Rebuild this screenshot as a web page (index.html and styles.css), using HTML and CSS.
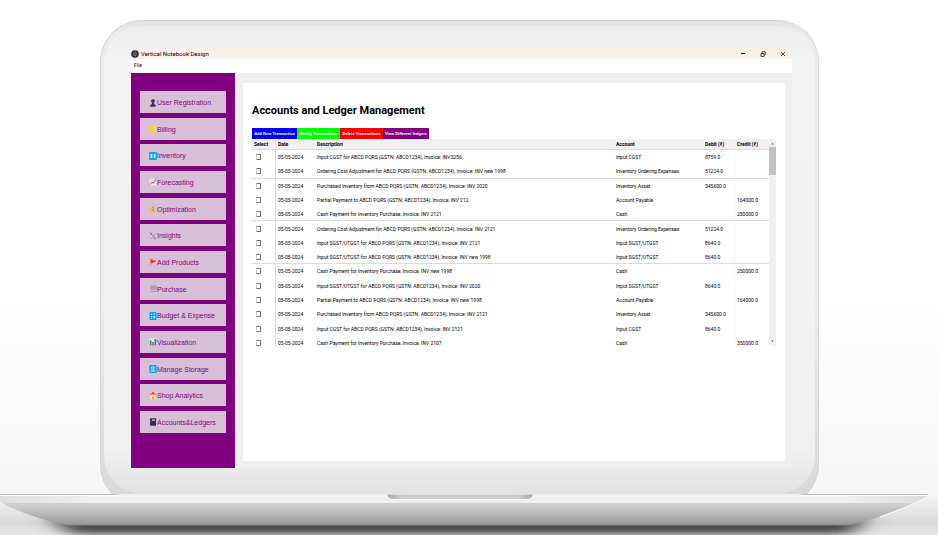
FILE: index.html
```html
<!DOCTYPE html>
<html lang="en">
<head>
<meta charset="utf-8">
<meta name="viewport" content="width=device-width, initial-scale=1">
<title>Vertical Notebook Design</title>
<link rel="stylesheet" href="styles.css">
</head>
<body>
<div class="laptop">
  <div class="lid">
    <div class="bezel">
      <div class="screen">
        <header class="titlebar">
          <svg class="logo" viewBox="0 0 8 8"><circle cx="4" cy="4" r="3.8" fill="#2b303c"/><path d="M3 2.200v2.600a1 1 0 0 0 2 0V3.200M4 1.800l1.400.8" fill="none" stroke="#a9b4c4" stroke-width=".7"/></svg>
          <span class="caption">Vertical Notebook Design</span>
          <button class="win" aria-label="Minimize"><svg viewBox="0 0 6 6"><path d="M1 2.500h4" stroke="#000"/></svg></button>
          <button class="win" aria-label="Restore"><svg viewBox="0 0 6 6"><path d="M1 2.500h3v3H1zM2.200 2V.8h3v3H4.400" fill="none" stroke="#222" stroke-width=".8"/></svg></button>
          <button class="win" aria-label="Close"><svg viewBox="0 0 6 6"><path d="M1 1l4 4M5 1L1 5" stroke="#222" stroke-width=".8"/></svg></button>
        </header>
        <div class="menubar"><button class="menu">File</button></div>
        <div class="workspace">
          <nav class="sidebar">
            <button class="tab"><svg viewBox="0 0 8 8"><path d="M4 .3a1.700 1.700 0 0 1 1 3.200L5.200 5l1.500 1v1.700H1.300V6l1.500-1L3 3.500A1.700 1.700 0 0 1 4 .3z" fill="#44305c"/></svg>User Registration</button>
            <button class="tab"><svg viewBox="0 0 8 8"><path d="M1 .5h6v7H1z" fill="#ffd43b"/><path d="M2 2.500h2M2 4.500h3" stroke="#e8a91d" stroke-width=".7"/></svg>Billing</button>
            <button class="tab"><svg viewBox="0 0 8 8"><rect width="8" height="8" rx="1" fill="#00a6ed"/><path d="M1.500 1.500L4 3l2.500-1.500v5L4 5 1.500 6.500z" fill="#d8f2ff"/><path d="M3.200 3.200h1.600v1.600H3.200z" fill="#0084ce"/></svg>Inventory</button>
            <button class="tab"><svg viewBox="0 0 8 8"><path d="M.5.5h7v7h-7z" fill="#efe9f4"/><path d="M.5 3h7M.5 5.500h7M3 .5v7M5.500.5v7" stroke="#cfc2dc" stroke-width=".4"/><path d="M.8 6.800l2.200-2.600 1.300 1L7.300.8" fill="none" stroke="#f0304c" stroke-width=".9"/></svg>Forecasting</button>
            <button class="tab"><svg viewBox="0 0 8 8"><path d="M3 .5h2L4.700 2.200C6.500 3 7 4.500 6.800 6 6.600 7.300 5.600 7.600 4 7.600S1.400 7.300 1.200 6C1 4.500 1.500 3 3.300 2.200z" fill="#f9b65b"/><path d="M3 2.300h2M4 3.700v2.800M3.300 5h1.400" stroke="#a56a3a" stroke-width=".6"/></svg>Optimization</button>
            <button class="tab"><svg viewBox="0 0 8 8"><path d="M1.200 1l4 4.200M6.500 1.500L2 7M4 5.500l2.500 2" stroke="#8d86a8" stroke-width=".8"/><path d="M1 .6l2 1.800" stroke="#3f6ea8"/><circle cx="6" cy="6" r=".8" fill="#48a070"/></svg>Insights</button>
            <button class="tab"><svg viewBox="0 0 8 8"><path d="M1.300.5v7" stroke="#f08a3c" stroke-width=".8"/><path d="M1.700.8L7.500 3.300 1.700 5.800z" fill="#f8312f"/></svg>Add Products</button>
            <button class="tab"><svg viewBox="0 0 8 8"><path d="M.5 1h6.800v3.500H1.500M1 2.800h6M3 1v3.500M5.200 1v3.500M1 6.500h6.500" fill="none" stroke="#918d98" stroke-width=".8"/></svg>Purchase</button>
            <button class="tab"><svg viewBox="0 0 8 8"><rect x=".5" width="7" height="8" rx="1" fill="#00a6ed"/><path d="M2 1.500h1.200v1.200H2zM2 4h1.200v1.200H2zM4.600 1.500h1.200v1.200H4.600zM4.600 4h1.200v2.500H4.600zM2 6h1.200v.8H2z" fill="#e8f8ff"/></svg>Budget &amp; Expense</button>
            <button class="tab"><svg viewBox="0 0 8 8"><path d="M.3.3h7.400v7.400H.3z" fill="#e9e4ef"/><path d="M.8 2.500h1.700v5H.8z" fill="#00a35c"/><path d="M3.200 4h1.500v3.500H3.200z" fill="#f52b5c"/><path d="M5.500 1h1.700v6.500H5.500z" fill="#0084ce"/></svg>Visualization</button>
            <button class="tab"><svg viewBox="0 0 8 8"><rect x=".3" width="7.400" height="8" rx="1" fill="#00a6ed"/><path d="M2.500 1.500h3v3h-3zM1.500 5.500h5v1h-5z" fill="#e8f8ff"/><path d="M4 2v2" stroke="#0084ce"/></svg>Manage Storage</button>
            <button class="tab"><svg viewBox="0 0 8 8"><path d="M1.200 3h5.600v4.700H1.200z" fill="#fbd9a0"/><path d="M.5 1.200h7L7 3H1z" fill="#f58a3c"/><path d="M3 0h2v2H3z" fill="#f8453f"/><path d="M3.200 4.500h1.600v3.200H3.200z" fill="#e49a4c"/></svg>Shop Analytics</button>
            <button class="tab"><svg viewBox="0 0 8 8"><path d="M1 .3h6v7.400H1z" fill="#38244f"/><path d="M3 1.500h2.800V3H3z" fill="#c9bdd6"/><path d="M1.700.3v7" stroke="#77628f" stroke-width=".4"/></svg>Accounts&amp;Ledgers</button>
          </nav>
          <main class="content">
            <section class="panel">
              <h1>Accounts and Ledger Management</h1>
              <div class="actions">
                <button class="add">Add New Transaction</button>
                <button class="modify">Modify Transactions</button>
                <button class="delete">Delete Transactions</button>
                <button class="view">View Different ledgers</button>
              </div>
              <div class="scroller">
                <table>
                  <colgroup><col class="c-select"><col class="c-date"><col class="c-desc"><col class="c-account"><col class="c-debit"><col class="c-credit"></colgroup>
                  <thead><tr><th>Select</th><th>Date</th><th>Description</th><th>Account</th><th>Debit (₹)</th><th>Credit (₹)</th></tr></thead>
                  <tbody>
                    <tr><td><input type="checkbox" aria-label="Select row 1"></td><td>05-05-2024</td><td>Input CGST for ABCD PQRS (GSTN: ABCD1234), Invoice: INV3256</td><td>Input CGST</td><td>8759.0</td><td></td></tr>
                    <tr><td><input type="checkbox" aria-label="Select row 2"></td><td>05-05-2024</td><td>Ordering Cost Adjustment for ABCD PQRS (GSTN: ABCD1234), Invoice: INV new 1998</td><td>Inventory Ordering Expenses</td><td>51224.0</td><td></td></tr>
                    <tr><td><input type="checkbox" aria-label="Select row 3"></td><td>05-05-2024</td><td>Purchased Inventory from ABCD PQRS (GSTN: ABCD1234), Invoice: INV 2020</td><td>Inventory Asset</td><td>345600.0</td><td></td></tr>
                    <tr><td><input type="checkbox" aria-label="Select row 4"></td><td>05-05-2024</td><td>Partial Payment to ABCD PQRS (GSTN: ABCD1234), Invoice: INV 212</td><td>Account Payable</td><td></td><td>164000.0</td></tr>
                    <tr><td><input type="checkbox" aria-label="Select row 5"></td><td>05-05-2024</td><td>Cash Payment for Inventory Purchase, Invoice: INV 2121</td><td>Cash</td><td></td><td>250000.0</td></tr>
                    <tr><td><input type="checkbox" aria-label="Select row 6"></td><td>05-05-2024</td><td>Ordering Cost Adjustment for ABCD PQRS (GSTN: ABCD1234), Invoice: INV 2121</td><td>Inventory Ordering Expenses</td><td>51224.0</td><td></td></tr>
                    <tr><td><input type="checkbox" aria-label="Select row 7"></td><td>05-05-2024</td><td>Input SGST/UTGST for ABCD PQRS (GSTN: ABCD1234), Invoice: INV 2121</td><td>Input SGST/UTGST</td><td>8640.0</td><td></td></tr>
                    <tr><td><input type="checkbox" aria-label="Select row 8"></td><td>05-05-2024</td><td>Input SGST/UTGST for ABCD PQRS (GSTN: ABCD1234), Invoice: INV new 1998</td><td>Input SGST/UTGST</td><td>8640.0</td><td></td></tr>
                    <tr><td><input type="checkbox" aria-label="Select row 9"></td><td>05-05-2024</td><td>Cash Payment for Inventory Purchase, Invoice: INV new 1998</td><td>Cash</td><td></td><td>250000.0</td></tr>
                    <tr><td><input type="checkbox" aria-label="Select row 10"></td><td>05-05-2024</td><td>Input SGST/UTGST for ABCD PQRS (GSTN: ABCD1234), Invoice: INV 2020</td><td>Input SGST/UTGST</td><td>8640.0</td><td></td></tr>
                    <tr><td><input type="checkbox" aria-label="Select row 11"></td><td>05-05-2024</td><td>Partial Payment to ABCD PQRS (GSTN: ABCD1234), Invoice: INV new 1998</td><td>Account Payable</td><td></td><td>164000.0</td></tr>
                    <tr><td><input type="checkbox" aria-label="Select row 12"></td><td>05-05-2024</td><td>Purchased Inventory from ABCD PQRS (GSTN: ABCD1234), Invoice: INV 2121</td><td>Inventory Asset</td><td>345600.0</td><td></td></tr>
                    <tr><td><input type="checkbox" aria-label="Select row 13"></td><td>05-05-2024</td><td>Input CGST for ABCD PQRS (GSTN: ABCD1234), Invoice: INV 2121</td><td>Input CGST</td><td>8640.0</td><td></td></tr>
                    <tr><td><input type="checkbox" aria-label="Select row 14"></td><td>05-05-2024</td><td>Cash Payment for Inventory Purchase, Invoice: INV 2107</td><td>Cash</td><td></td><td>350000.0</td></tr>
                  </tbody>
                </table>
                <div class="scrollbar">
                  <svg viewBox="0 0 7 8"><path d="M2 5.500L3.500 3.500 5 5.500z" fill="#888"/></svg>
                  <div class="thumb"></div>
                  <svg class="down" viewBox="0 0 7 8"><path d="M2.500 2.500h2L3.500 4z" fill="#333"/></svg>
                </div>
              </div>
            </section>
          </main>
        </div>
      </div>
    </div>
  </div>
</div>
<svg class="base" viewBox="0 0 938 41" preserveAspectRatio="none" aria-hidden="true">
  <defs>
    <linearGradient id="body" x1="0" y1="0" x2="0" y2="1"><stop offset="0" stop-color="#d2d2d2"/><stop offset=".4" stop-color="#bdbdbd"/><stop offset="1" stop-color="#969696"/></linearGradient>
    <linearGradient id="deck" x1="0" x2="1"><stop offset="0" stop-color="#dedede"/><stop offset=".1" stop-color="#f0f0f0"/><stop offset=".9" stop-color="#f0f0f0"/><stop offset="1" stop-color="#d8d8d8"/></linearGradient>
    <linearGradient id="ground" x1="0" y1="0" x2="0" y2="1"><stop offset="0" stop-color="#f6f6f6"/><stop offset=".7" stop-color="#dadada"/><stop offset="1" stop-color="#e6e6e6"/></linearGradient>
    <linearGradient id="lip" x1="0" x2="1"><stop offset="0" stop-color="#a8a8a8"/><stop offset=".1" stop-color="#cdcdcd"/><stop offset=".9" stop-color="#cdcdcd"/><stop offset="1" stop-color="#a8a8a8"/></linearGradient>
    <filter id="soft" x="-20%" y="-200%" width="140%" height="500%"><feGaussianBlur stdDeviation="12 3"/></filter>
    <clipPath id="shell"><path d="M0 0H928L927 4Q892 21 850 31H68Q30 24 0 8z"/></clipPath>
  </defs>
  <path d="M0 0H938V41H0z" fill="url(#ground)"/>
  <path d="M50 24H868L850 40H70z" fill="#4c4c4c" filter="url(#soft)"/>
  <g clip-path="url(#shell)">
    <path d="M0 0H938V9H0z" fill="url(#deck)"/>
    <path d="M0 9H938V31H0z" fill="url(#body)"/>
  </g>
  <path d="M68 31H850" stroke="#858585" stroke-width="1"/>
  <path d="M0 .5H118M801 .5H927" stroke="#bdbdbd"/>
  <path d="M0 1.500H119M801 1.500H927L926 4Q905 14 880 23" fill="none" stroke="#fff"/>
  <path d="M387 .5H533Q531 5 527 5H393Q389 5 387 .5z" fill="url(#lip)"/>
  <path d="M391 5.500H529" stroke="#fff"/>
</svg>
</body>
</html>
```
FILE: styles.css
```css
* {
  box-sizing: border-box;
}

body {
  margin: 0;
  overflow: hidden;
  background: linear-gradient(#fff 0, #fff 300px, #f6f6f6 500px);
  font-family: Roboto, "Liberation Sans", Arial, sans-serif;
  color: #000;
}

button {
  margin: 0;
  padding: 0;
  border: 0;
  background: none;
  color: inherit;
  font: inherit;
  white-space: nowrap;
}

.laptop {
  padding: 20px 119px 0 100px;
}

.lid {
  margin-bottom: -13px;
  padding: 6px 4px 13px;
  border-radius: 42px;
  background: linear-gradient(#e0e0de, #ececec 12px, #ececec 60%, #d8d8d8);
  box-shadow: inset 0 0 0 1px #d6d6d2, 0 0 0 1px #fff;
}

.bezel {
  padding: 22px 23px 26px 27px;
  border-radius: 38px;
  background: linear-gradient(#ededed, #f3f3f3 30px, #f1f1f1 90%, #e2e2e2);
}

.titlebar {
  display: flex;
  align-items: center;
  height: 11px;
  padding: 0 6px 0 0;
  background: #faf0eb;
  font-size: 6px;
}

.logo {
  width: 8px;
  height: 8px;
  margin-right: 2px;
}

.caption {
  flex: 1;
}

.win {
  display: flex;
  width: 6px;
  height: 6px;
  margin-left: 14px;
}

.win svg {
  width: 6px;
  height: 6px;
}

.menubar {
  display: flex;
  align-items: flex-start;
  height: 14px;
  padding: 3px 3px 0;
  background: #fff;
  font-size: 5px;
  line-height: 7px;
}

.workspace {
  display: flex;
  background: #efefef;
}

.sidebar {
  display: flex;
  flex: none;
  flex-direction: column;
  justify-content: space-between;
  width: 104px;
  height: 395px;
  padding: 18px 9px 35px;
  background: #800080;
}

.tab {
  display: flex;
  align-items: center;
  height: 22px;
  padding: 1px 9px 0;
  background: #d8bfd8;
  color: #800080;
  font-family: "Liberation Sans", Arial, sans-serif;
  font-size: 7px;
}

.tab svg {
  flex: none;
  width: 8px;
  height: 8px;
}

.content {
  display: flex;
  flex: 1;
  padding: 10px 7px 7px 8px;
}

.panel {
  flex: 1;
  padding: 20px 9px 0;
  background: #fff;
}

h1 {
  margin: 0 0 10px;
  font-size: 11px;
  line-height: 15px;
  white-space: nowrap;
}

.actions {
  display: flex;
  color: #fff;
  font-family: "Liberation Sans", Arial, sans-serif;
  font-size: 4px;
  font-weight: bold;
}

.actions button {
  height: 11px;
}

.add {
  width: 45px;
}

.modify,
.delete {
  width: 43px;
}

.view {
  width: 46px;
}

.actions .add {
  background: #00f;
}

.actions .modify {
  background: #0f0;
}

.actions .delete {
  background: #f00;
}

.actions .view {
  background: #800080;
}

.scroller {
  display: flex;
  align-items: flex-start;
  height: 207px;
  overflow: hidden;
}

table {
  flex: 1;
  height: 211px;
  border-collapse: separate;
  border-spacing: 0;
  table-layout: fixed;
  font-size: 5px;
  line-height: 6px;
}

.c-select {
  width: 24px;
}

.c-date {
  width: 39px;
}

.c-account {
  width: 89px;
}

.c-debit {
  width: 32px;
}

.c-credit {
  width: 34px;
}

th,
td {
  height: 14px;
  padding: 0 0 0 2px;
  overflow: hidden;
  text-align: left;
  white-space: nowrap;
}

th {
  height: 11px;
  border-bottom: 1px solid #dcdcdc;
  background: #f1f1f1;
}

th:first-child,
td:first-child {
  border-right: 1px solid #dcdcdc;
}

td:nth-child(5) {
  border-right: 1px solid #f6f6f6;
}

tbody tr:nth-child(3n + 2):not(:nth-child(n + 9)) td {
  border-bottom: 1px solid #dcdcdc;
}

input[type="checkbox"] {
  display: block;
  width: 5px;
  height: 6px;
  margin: 0 0 0 2px;
  border: 1px solid #777;
  border-left-color: #ccc;
  border-radius: 1px;
  background: #fff;
  appearance: none;
}

.scrollbar {
  display: flex;
  flex: none;
  flex-direction: column;
  width: 7px;
  height: 207px;
  background: #f0f0f0;
}

.scrollbar svg {
  width: 7px;
  height: 8px;
}

.scrollbar .down {
  margin-top: auto;
}

.thumb {
  height: 28px;
  background: #c1c1c1;
}

.base {
  position: relative;
  display: block;
  width: 100%;
  height: 41px;
}
```
